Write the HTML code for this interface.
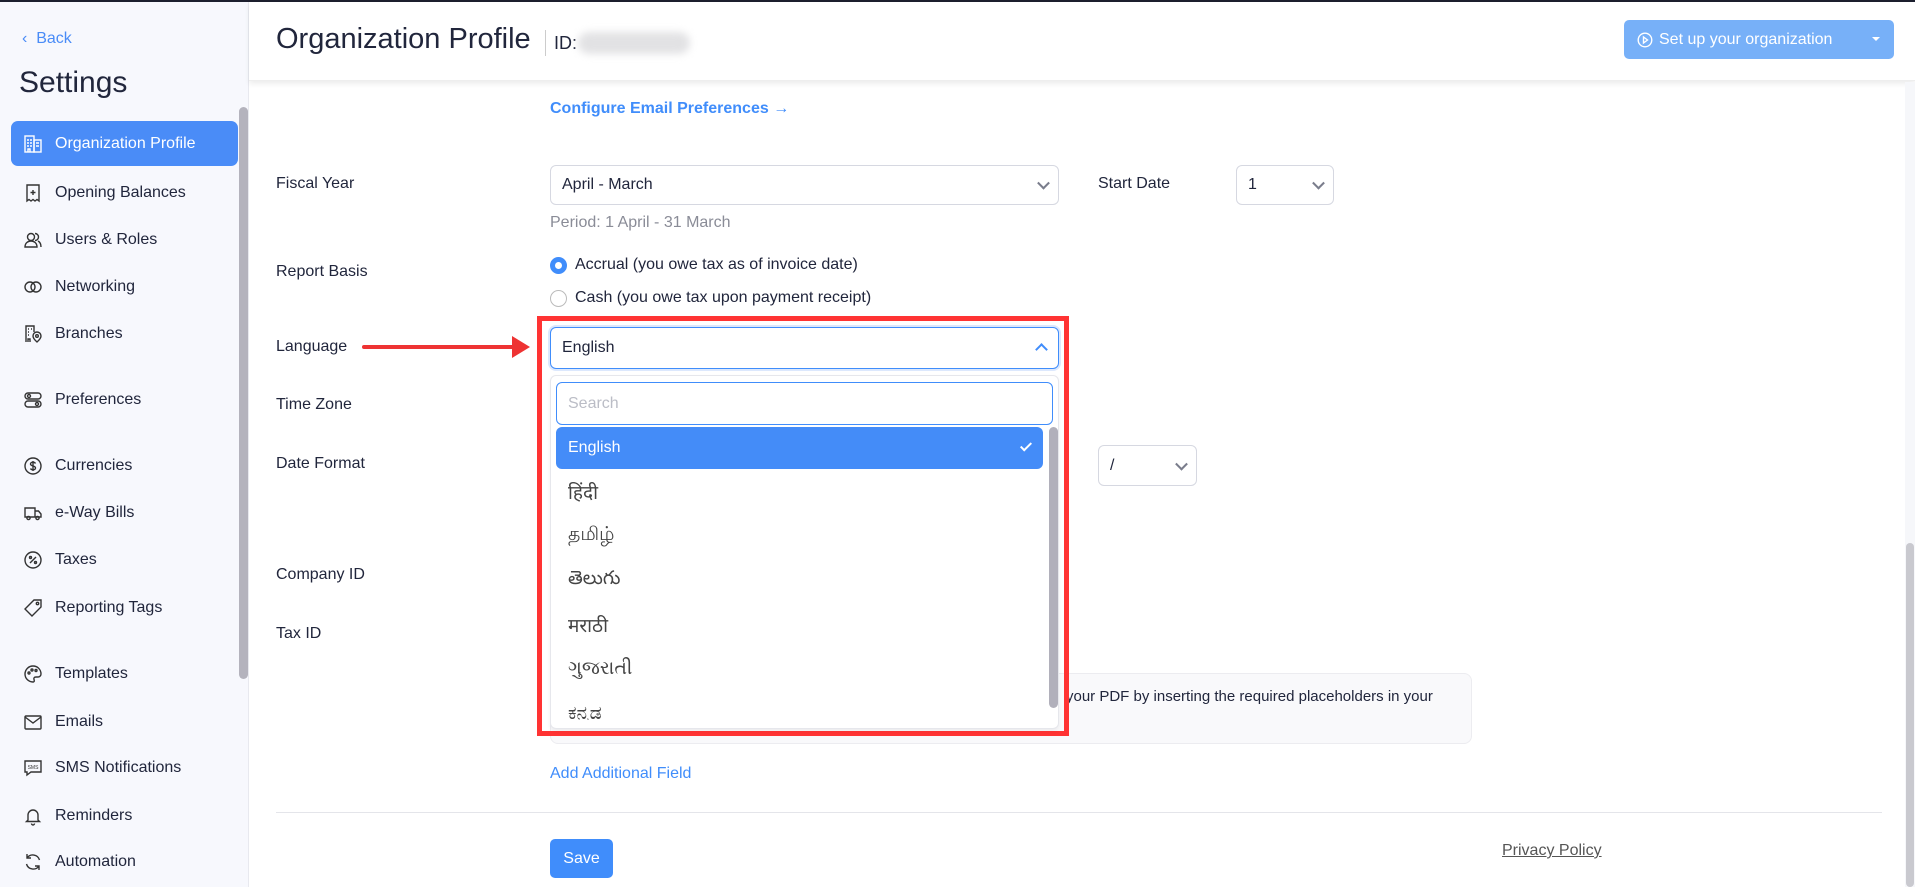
<!DOCTYPE html>
<html><head><meta charset="utf-8"><style>
*{box-sizing:border-box;margin:0;padding:0}
body{width:1915px;height:887px;overflow:hidden;background:#fff;font-family:"Liberation Sans",sans-serif;color:#21263c;position:relative;font-size:16px}
.abs{position:absolute}
#topline{left:0;top:0;width:1915px;height:2px;background:#1c1f2e}
#side{left:0;top:2px;width:249px;height:885px;background:#f7f8fd;border-right:1px solid #e8e9ef}
.nav{position:absolute;left:11px;width:227px;height:45px;display:flex;align-items:center;padding-left:12px;font-size:16px;color:#21263c}
.nav svg{width:20px;height:20px;margin-right:12px;flex:none}
.nav.act{background:#4a8cf7;color:#fff;border-radius:7px}
.lbl{position:absolute;left:276px;font-size:16px;color:#21263c;transform:translateY(-50%)}
.sel{position:absolute;border:1px solid #d6d8e1;border-radius:6px;background:#fff;font-size:16px;display:flex;align-items:center;padding-left:11px}
.chev{position:absolute;right:10px;top:50%;width:9px;height:9px;border-right:2.5px solid #7a7d8c;border-bottom:2.5px solid #7a7d8c;transform:translateY(-70%) rotate(45deg)}
.item{position:absolute;left:568px;font-size:19px;color:#444;font-family:"Liberation Sans","Noto Sans CJK SC",sans-serif;transform:translateY(-50%)}
</style></head><body>
<div id="topline" class="abs"></div>
<div id="side" class="abs">
  <div class="abs" style="left:22px;top:28px;color:#4a8cf7;font-size:16px">&#8249;&nbsp; Back</div>
  <div class="abs" style="left:19px;top:64px;font-size:30px;color:#21263c">Settings</div>
  <div class="abs" style="left:239px;top:105px;width:9px;height:572px;background:#b4b3bd;border-radius:5px"></div>
</div>
<div class="nav act" style="top:121px"><svg viewBox="0 0 20 20" fill="none" stroke="#fff" stroke-width="1.4"><rect x="2" y="2" width="9" height="16"/><rect x="11" y="6" width="7" height="12"/><path d="M4 6h2M7 6h2M4 9h2M7 9h2M4 12h2M7 12h2M13 9h3M13 12h3M5 18v-3h2v3"/></svg>Organization Profile</div>
<div class="nav" style="top:170px"><svg viewBox="0 0 20 20" fill="none" stroke="#333" stroke-width="1.4"><path d="M4 2h12v16l-2-1.5-2 1.5-2-1.5-2 1.5-2-1.5-2 1.5zM10 7v5M7.5 9.5h5"/></svg>Opening Balances</div>
<div class="nav" style="top:217px"><svg viewBox="0 0 20 20" fill="none" stroke="#333" stroke-width="1.4"><circle cx="8" cy="7" r="3.5"/><path d="M2 17c0-4 3-6 6-6s6 2 6 6zM12 3.5a3.5 3.5 0 010 7M15 11c2 1 3 3 3 6"/></svg>Users &amp; Roles</div>
<div class="nav" style="top:264px"><svg viewBox="0 0 20 20" fill="none" stroke="#333" stroke-width="1.4"><circle cx="7" cy="10" r="5"/><circle cx="13" cy="10" r="5"/></svg>Networking</div>
<div class="nav" style="top:311px"><svg viewBox="0 0 20 20" fill="none" stroke="#333" stroke-width="1.4"><path d="M3 18V2h8v6M5 5h1M8 5h1M5 8h1M5 11h1M5 18v-3h2v3"/><path d="M14 18s-4-3.5-4-6a4 4 0 018 0c0 2.5-4 6-4 6z"/><circle cx="14" cy="12" r="1.3"/></svg>Branches</div>
<div class="nav" style="top:377px"><svg viewBox="0 0 20 20" fill="none" stroke="#333" stroke-width="1.4"><rect x="2" y="3" width="16" height="6" rx="3"/><rect x="2" y="11" width="16" height="6" rx="3"/><circle cx="6" cy="6" r="1.5"/><circle cx="14" cy="14" r="1.5"/></svg>Preferences</div>
<div class="nav" style="top:443px"><svg viewBox="0 0 20 20" fill="none" stroke="#333" stroke-width="1.4"><circle cx="10" cy="10" r="8"/><path d="M12.5 7.5c-.5-1-1.5-1.3-2.5-1.3-1.5 0-2.5.8-2.5 1.8 0 2.5 5 1.3 5 4 0 1-1 1.8-2.5 1.8-1 0-2-.4-2.5-1.3M10 5v10"/></svg>Currencies</div>
<div class="nav" style="top:490px"><svg viewBox="0 0 20 20" fill="none" stroke="#333" stroke-width="1.4"><path d="M2 5h10v9H2zM12 8h3.5l2.5 3v3h-6"/><circle cx="5.5" cy="15" r="1.6"/><circle cx="14.5" cy="15" r="1.6"/></svg>e-Way Bills</div>
<div class="nav" style="top:537px"><svg viewBox="0 0 20 20" fill="none" stroke="#333" stroke-width="1.4"><circle cx="10" cy="10" r="8"/><path d="M7 13l6-6"/><circle cx="7.5" cy="7.5" r="1"/><circle cx="12.5" cy="12.5" r="1"/></svg>Taxes</div>
<div class="nav" style="top:585px"><svg viewBox="0 0 20 20" fill="none" stroke="#333" stroke-width="1.4"><path d="M11 2h7v7l-9 9-7-7z"/><circle cx="14.5" cy="5.5" r="1.2"/></svg>Reporting Tags</div>
<div class="nav" style="top:651px"><svg viewBox="0 0 20 20" fill="none" stroke="#333" stroke-width="1.4"><path d="M10 2a8 8 0 100 16c1.5 0 1.5-1.5 1-2.5s0-2.5 2-2.5h2a3 3 0 003-3c0-4.5-3.5-8-8-8z"/><circle cx="6" cy="9" r="1"/><circle cx="9" cy="6" r="1"/><circle cx="13" cy="6.5" r="1"/></svg>Templates</div>
<div class="nav" style="top:699px"><svg viewBox="0 0 20 20" fill="none" stroke="#333" stroke-width="1.4"><rect x="2" y="4" width="16" height="13" rx="1"/><path d="M2 5l8 6 8-6"/></svg>Emails</div>
<div class="nav" style="top:745px"><svg viewBox="0 0 20 20" fill="none" stroke="#333" stroke-width="1.4"><path d="M2 3h16v11H8l-4 3v-3H2z"/><text x="10" y="11" font-size="5" text-anchor="middle" fill="#333" stroke="none" font-family="Liberation Sans">SMS</text></svg>SMS Notifications</div>
<div class="nav" style="top:793px"><svg viewBox="0 0 20 20" fill="none" stroke="#333" stroke-width="1.4"><path d="M5 14V9a5 5 0 0110 0v5l1.5 1.5h-13zM8.5 17.5a1.5 1.5 0 003 0"/></svg>Reminders</div>
<div class="nav" style="top:839px"><svg viewBox="0 0 20 20" fill="none" stroke="#333" stroke-width="1.4"><path d="M16.5 8A7 7 0 004 6M3.5 12A7 7 0 0016 14M4 2v4h4M16 18v-4h-4"/></svg>Automation</div>

<div class="abs" style="left:249px;top:2px;width:1666px;height:79px;background:#fff;box-shadow:0 3px 5px rgba(0,0,0,0.07);border-bottom:1px solid #eee"></div>
<div class="abs" style="left:276px;top:23px;font-size:29px;color:#21263c">Organization Profile</div>
<div class="abs" style="left:545px;top:30px;width:1px;height:26px;background:#ccc"></div>
<div class="abs" style="left:554px;top:33px;font-size:18px">ID:</div>
<div class="abs" style="left:578px;top:32px;width:112px;height:22px;background:#e2e2e4;border-radius:11px;filter:blur(4px)"></div>
<div class="abs" style="left:1624px;top:20px;width:270px;height:39px;background:#77b0f8;border-radius:5px;color:#fff;font-size:16px;display:flex;align-items:center">
  <svg style="margin-left:13px;margin-right:6px" width="16" height="16" viewBox="0 0 16 16" fill="none" stroke="#fff" stroke-width="1.4"><circle cx="8" cy="8" r="6.8"/><path d="M6.5 5v6l4-3z"/></svg>Set up your organization
  <span style="position:absolute;right:14px;top:17px;border:4px solid transparent;border-top:4px solid #fff"></span></div>
<div class="abs" style="left:1905px;top:82px;width:10px;height:805px;background:#f6f7fa"></div>
<div class="abs" style="left:1906px;top:543px;width:8px;height:344px;background:#c9c9cf;border-radius:4px"></div>

<div class="abs" style="left:550px;top:100px;font-size:16px;font-weight:bold;color:#408dfb">Configure Email Preferences &#8594;</div>

<div class="lbl" style="top:184px">Fiscal Year</div>
<div class="sel" style="left:550px;top:165px;width:509px;height:40px">April - March<span class="chev"></span></div>
<div class="lbl" style="left:1098px;top:184px">Start Date</div>
<div class="sel" style="left:1236px;top:165px;width:98px;height:40px">1<span class="chev"></span></div>
<div class="abs" style="left:550px;top:214px;font-size:16px;color:#8a8c97">Period: 1 April - 31 March</div>

<div class="lbl" style="top:272px">Report Basis</div>
<div class="abs" style="left:550px;top:257px;width:17px;height:17px;border-radius:50%;border:5px solid #408dfb;background:#fff"></div>
<div class="abs" style="left:575px;top:256px;font-size:16px">Accrual (you owe tax as of invoice date)</div>
<div class="abs" style="left:550px;top:290px;width:17px;height:17px;border-radius:50%;border:1px solid #bbb"></div>
<div class="abs" style="left:575px;top:289px;font-size:16px">Cash (you owe tax upon payment receipt)</div>

<div class="lbl" style="top:347px">Language</div>
<div class="abs" style="left:362px;top:345px;width:155px;height:4px;background:#ee3333;border-radius:2px"></div>
<div class="abs" style="left:512px;top:336px;border-left:18px solid #ee3333;border-top:11px solid transparent;border-bottom:11px solid transparent"></div>
<div class="lbl" style="top:405px">Time Zone</div>
<div class="lbl" style="top:464px">Date Format</div>
<div class="sel" style="left:1098px;top:445px;width:99px;height:41px">/<span class="chev"></span></div>
<div class="lbl" style="top:575px">Company ID</div>
<div class="lbl" style="top:634px">Tax ID</div>

<div class="abs" style="left:550px;top:673px;width:922px;height:71px;background:#f9f9fb;border:1px solid #ececf0;border-radius:8px"></div>
<div class="abs" style="left:1066px;top:688px;font-size:15px">your PDF by inserting the required placeholders in your</div>
<div class="abs" style="left:550px;top:765px;font-size:16px;color:#408dfb">Add Additional Field</div>
<div class="abs" style="left:276px;top:812px;width:1606px;height:1px;background:#e4e5ea"></div>
<div class="abs" style="left:550px;top:839px;width:63px;height:39px;background:#408dfb;color:#fff;border-radius:5px;font-size:16px;display:flex;align-items:center;justify-content:center">Save</div>
<div class="abs" style="left:1502px;top:842px;font-size:16px;color:#555;text-decoration:underline">Privacy Policy</div>

<div class="abs" style="left:537px;top:316px;width:532px;height:420px;border:5px solid #ff3333"></div>
<div class="sel" style="left:550px;top:327px;width:509px;height:42px;border-color:#408dfb;box-shadow:0 0 0 2px #dce8fd">English
  <span style="position:absolute;right:12px;top:17px;width:9px;height:9px;border-left:2.5px solid #408dfb;border-top:2.5px solid #408dfb;transform:rotate(45deg)"></span></div>
<div class="abs" style="left:550px;top:375px;width:509px;height:354px;background:#fff;border:1px solid #e6e7ec;border-radius:6px;box-shadow:0 2px 4px rgba(0,0,0,0.06)"></div>
<div class="abs" style="left:556px;top:382px;width:497px;height:43px;border:1px solid #408dfb;border-radius:6px;color:#bbbdc6;padding-left:11px;line-height:41px;font-size:16px">Search</div>
<div class="abs" style="left:556px;top:427px;width:487px;height:42px;background:#448cf8;border-radius:6px;color:#fff;font-size:16px;padding-left:12px;line-height:42px">English
  <span style="position:absolute;right:14px;top:13px;width:6px;height:11px;border-right:2.5px solid #fff;border-bottom:2.5px solid #fff;transform:rotate(45deg)"></span></div>
<div class="abs" style="left:1049px;top:427px;width:9px;height:281px;background:#b1b0bb;border-radius:5px"></div>
<div class="item" style="top:492px">हिंदी</div>
<div class="item" style="top:536px">தமிழ்</div>
<div class="item" style="top:581px">తెలుగు</div>
<div class="item" style="top:625px">मराठी</div>
<div class="item" style="top:669px">ગુજરાતી</div>
<div class="item" style="top:714px;clip-path:inset(0 0 5px 0)">ಕನ್ನಡ</div>
</body></html>
